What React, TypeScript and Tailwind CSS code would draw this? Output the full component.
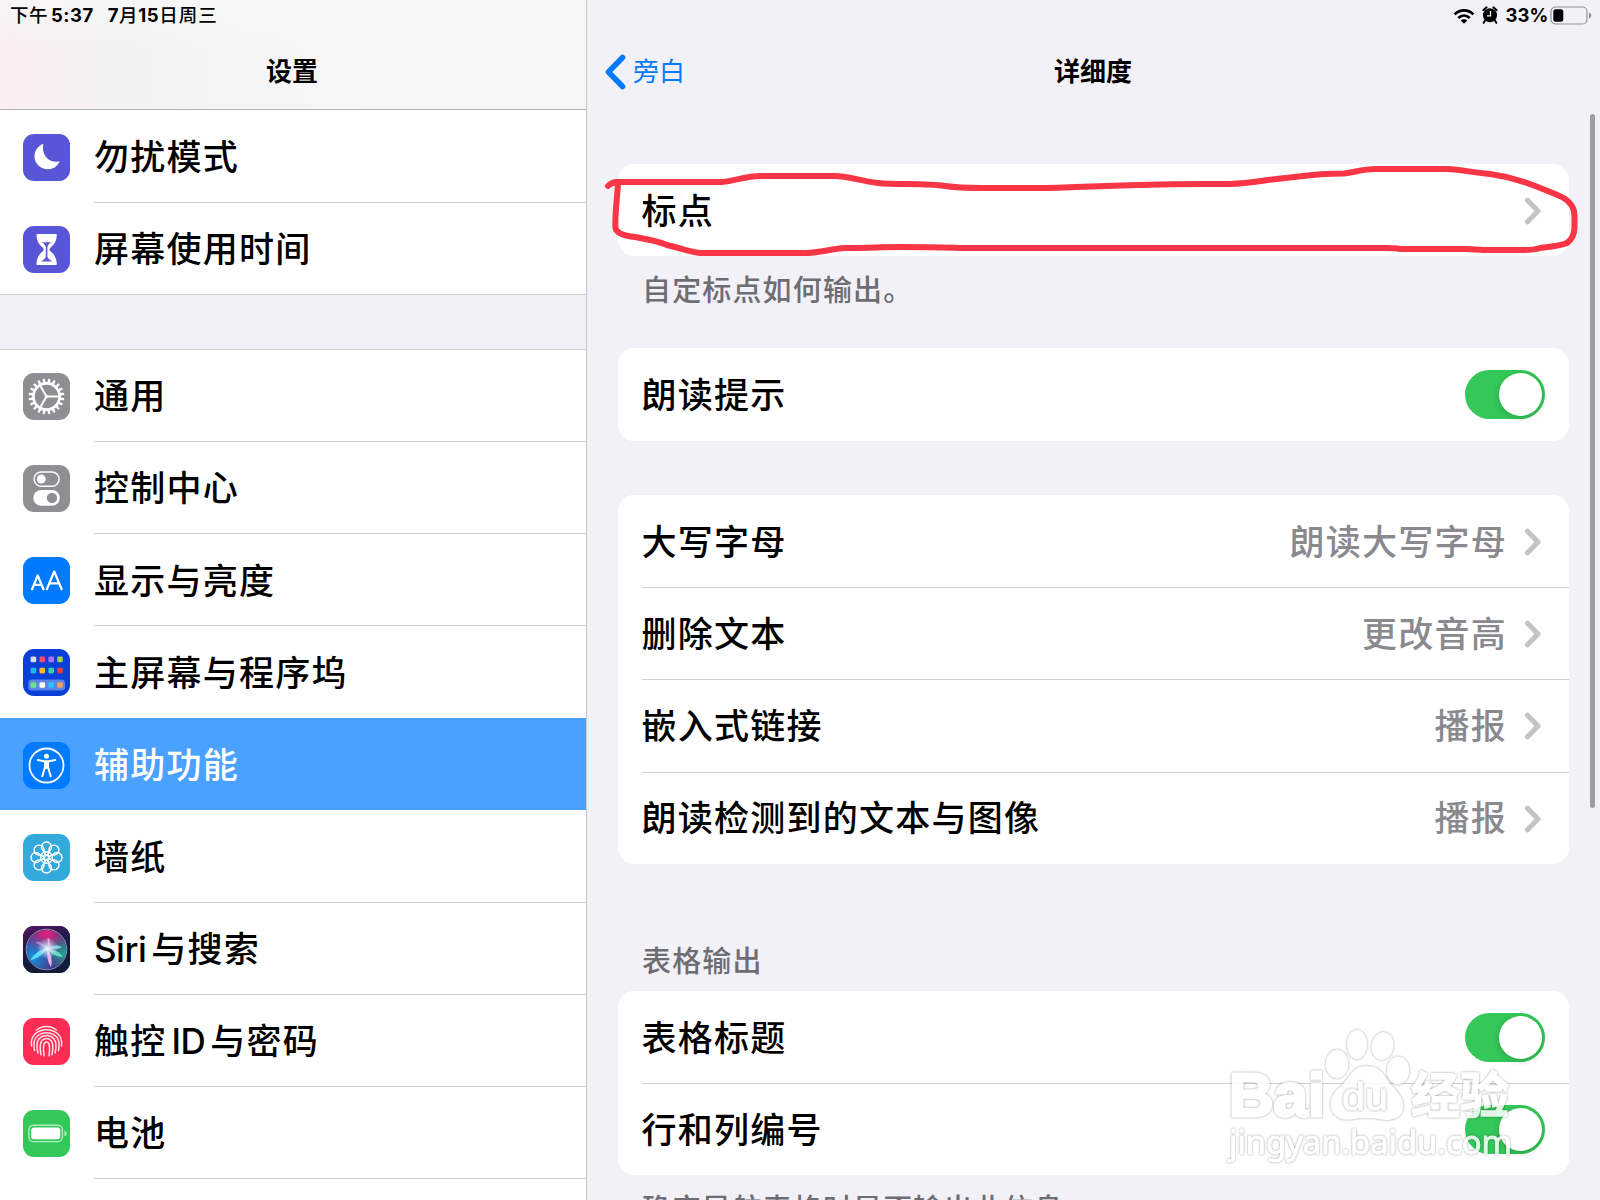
import React from "react";

const FONT = "font-['Inter','Noto_Sans_CJK_SC',sans-serif]";

const gearTeeth = Array.from({ length: 20 }, (_, i) => i * 18);
const petals = Array.from({ length: 8 }, (_, i) => i * 45);
const dockDots: [number, number, string][] = [
  [10.4, 10.4, "#d9dde8"], [19.3, 10.4, "#f0506e"], [28.2, 10.4, "#b070f5"], [37, 10.4, "#a6cf4e"],
  [10.4, 21.6, "#22b8f5"], [19.3, 21.6, "#f5b82e"], [28.2, 21.6, "#34d0b0"], [37, 21.6, "#f03c3c"],
  [10.4, 36, "#6be38a"], [19.3, 36, "#ffffff"], [28.2, 36, "#2fc0fa"], [37, 36, "#f5a055"],
];

const icons: Record<string, React.ReactNode> = {
  moon: <path d="M20.300 10.300C18.300 19 24 27.600 32.500 27.800c1.200 0 2.300-.2 3.300-.6.5-.2.8.1.6.6C34.600 32.300 30.200 35.200 25 35.200 17.500 35.200 11.500 29.700 11.500 22.300c0-5.200 3.200-10.200 8.100-12.400.6-.3.9-.1.7.4z" fill="#fff" />,
  hourglass: (
    <>
      <path d="M14.500 8h18.300c.8 0 1.100.5 1 1.300-.3 5.700-2.300 9.200-6.100 12.200-.8.600-1.100 1.300-1.100 2s.3 1.400 1.100 2c3.800 3 5.800 6.500 6.100 12.200.1.800-.2 1.300-1 1.300H14.500c-.8 0-1.100-.5-1-1.300.3-5.700 2.300-9.200 6.100-12.200.8-.6 1.100-1.300 1.100-2s-.3-1.400-1.100-2c-3.800-3-5.800-6.500-6.100-12.200-.1-.8.200-1.300 1-1.300z" fill="#fff" />
      <path d="M18.700 16.200h9.800c-2.300 1.400-3.900 3-4.100 5v9.500c.4 1.700 2.600 3.200 5 4.900H17.800c2.400-1.700 4.600-3.200 5-4.900v-9.500c-.2-2-1.800-3.600-4.100-5z" fill="#5856d6" />
    </>
  ),
  gear: (
    <g stroke="#fff" fill="none">
      <circle cx="23.500" cy="23.500" r="13.100" strokeWidth="2.700" />
      {gearTeeth.map((a) => (
        <path key={a} d="M22 10.200L22.500 5.600h2l.5 4.600z" fill="#fff" stroke="none" transform={`rotate(${a + 9} 23.500 23.500)`} />
      ))}
      <path d="M23.500 23.500H36.500M23.500 23.500L17 12.300M23.500 23.500L17 34.700" strokeWidth="2" />
      <circle cx="23.500" cy="23.500" r="1.700" fill="#fff" stroke="none" />
    </g>
  ),
  control: (
    <>
      <rect x="11.100" y="6.900" width="25" height="14.400" rx="7.200" fill="none" stroke="#fff" strokeWidth="1.500" />
      <circle cx="18.300" cy="14.100" r="4.500" fill="#fff" />
      <rect x="10.300" y="25" width="26.500" height="15.800" rx="7.900" fill="#fff" />
      <circle cx="29" cy="32.900" r="5.200" fill="#8e8e93" />
    </>
  ),
  display: (
    <g fill="none" stroke="#fff" strokeWidth="2.200" strokeLinecap="round" strokeLinejoin="round">
      <path d="M9 32.300L14.700 18.500 20.500 32.300M11 27.800h7.500" />
      <path d="M23.800 32.300L31.200 14.500 38.700 32.300M26.300 26.400h9.800" />
    </g>
  ),
  home: (
    <>
      <rect x="5.300" y="30.600" width="36.800" height="11" rx="3.500" fill="#5b84e8" />
      {dockDots.map(([x, y, c]) => (
        <rect key={`${x}-${y}`} x={x - 2.8} y={y - 2.8} width="5.600" height="5.600" rx="1.300" fill={c} />
      ))}
    </>
  ),
  access: (
    <>
      <circle cx="23.500" cy="23.500" r="17" fill="none" stroke="#fff" strokeWidth="1.800" />
      <circle cx="23.500" cy="14.300" r="2.500" fill="#fff" />
      <path d="M14.800 18.100l6.200 1.200h5l6.200-1.200M22 19.500v5.500l-2.700 9.300M25 19.500v5.500l2.700 9.300M23.500 19.500v6.500" fill="none" stroke="#fff" strokeWidth="2" strokeLinecap="round" strokeLinejoin="round" />
    </>
  ),
  wallpaper: (
    <g fill="none" stroke="#fff" strokeWidth="1.400">
      {petals.map((a) => (
        <g key={a} transform={`rotate(${a} 23.500 23.500)`}>
          <circle cx="23.500" cy="13" r="5" />
          <path d="M20.800 17.600L23.500 21.500 26.200 17.600" strokeWidth="1.100" />
        </g>
      ))}
      <circle cx="23.500" cy="23.500" r="2.600" strokeWidth="1.100" />
    </g>
  ),
  siri: (
    <>
      <defs>
        <linearGradient id="orbBack" x1="0" y1="0" x2=".3" y2="1">
          <stop offset="0" stopColor="#5a1463" />
          <stop offset=".45" stopColor="#1c1a48" />
          <stop offset="1" stopColor="#101c38" />
        </linearGradient>
        <radialGradient id="orbPink" cx=".5" cy=".1" r=".6">
          <stop offset="0" stopColor="#e0247c" />
          <stop offset="1" stopColor="#e0247c" stopOpacity="0" />
        </radialGradient>
        <radialGradient id="orbTeal" cx=".95" cy=".6" r=".5">
          <stop offset="0" stopColor="#1fa48e" />
          <stop offset="1" stopColor="#1fa48e" stopOpacity="0" />
        </radialGradient>
        <radialGradient id="orbBlue" cx=".15" cy=".7" r=".6">
          <stop offset="0" stopColor="#1496e0" />
          <stop offset="1" stopColor="#1496e0" stopOpacity="0" />
        </radialGradient>
        <radialGradient id="orbGlow">
          <stop offset="0" stopColor="#fff" />
          <stop offset=".4" stopColor="#d8e6ff" stopOpacity=".65" />
          <stop offset="1" stopColor="#b8d4ff" stopOpacity="0" />
        </radialGradient>
      </defs>
      <rect width="47" height="47" fill="url(#orbBack)" />
      <circle cx="23.500" cy="23.500" r="19.800" fill="#4a2c82" />
      <circle cx="23.500" cy="23.500" r="19.800" fill="url(#orbPink)" />
      <circle cx="23.500" cy="23.500" r="19.800" fill="url(#orbTeal)" />
      <circle cx="23.500" cy="23.500" r="19.800" fill="url(#orbBlue)" />
      <circle cx="23.500" cy="23.500" r="20.300" fill="none" stroke="#8f93b4" strokeWidth="1" />
      <path d="M24 22L12.500 17c1-2.500 6-2 11.500 5z" fill="#c48ae0" opacity=".7" />
      <path d="M25 22l-.5-10.500c3 1 3.500 5 .5 10.500z" fill="#f2a0cc" opacity=".85" />
      <path d="M25 22c5-3.500 11-3 14-1-4 2.500-9 3-14 1z" fill="#8adce8" opacity=".85" />
      <path d="M25 23c6 0 12 3 15 8-6 0-12-3-15-8z" fill="#6fe8c4" opacity=".85" />
      <path d="M24.500 23c4 6 5 12 3.500 18-3-4-4.500-11-3.500-18z" fill="#f4b4ee" opacity=".95" />
      <path d="M24 22c-3 6-9 10.500-16.500 12C11 28 17 23.500 24 22z" fill="#5fe0fa" opacity=".95" />
      <circle cx="24.500" cy="22.500" r="11" fill="url(#orbGlow)" />
    </>
  ),
  touch: (
    <g fill="none" stroke="#ffe3e8" strokeWidth="1.500" strokeLinecap="round">
      <path d="M13.500 12c5.500-4.800 14.500-4.800 20 0" />
      <path d="M8.500 28c-.7-5.500.7-9.800 4-12.500 6-5 16-5 22 0 3.300 2.700 4.700 7 4 12.500" />
      <path d="M11.600 32.500c-1.300-6-.8-11.500 2.700-14.500 5.200-4.500 13.200-4.500 18.400 0 3.500 3 4 8.500 2.700 14.500" />
      <path d="M14.900 35c-1.400-6-1.400-11.500 1.400-14.500 4-4 10.400-4 14.400 0 2.800 3 2.800 8.500 1.400 14.500" />
      <path d="M18 36.800c-1.200-6-1.200-11.800 1-14.300 2.500-2.800 6.500-2.800 9 0 2.200 2.500 2.200 8.300 1 14.300" />
      <path d="M21 37.800c-.8-6-.8-10.800.5-12.800 1.200-1.500 2.800-1.500 4 0 1.300 2 1.300 6.800.5 12.800" />
    </g>
  ),
  battery: (
    <>
      <rect x="5.900" y="15.200" width="33.500" height="16.400" rx="4.600" fill="none" stroke="#b5ebc3" strokeWidth="1.400" />
      <rect x="8.200" y="17.600" width="29" height="11.600" rx="2.600" fill="#fff" />
      <path d="M41.500 20.800c1.400.3 2.300 1.300 2.300 2.600s-.9 2.300-2.300 2.600z" fill="#b5ebc3" />
    </>
  ),
};

type Item = { icon: string; label: React.ReactNode; bg: string; active?: boolean; last?: boolean };

function SideRow({ icon, label, bg, active, last }: Item) {
  return (
    <div className={`flex h-[92.15px] shrink-0 items-center pl-[23.500px] ${active ? "bg-[#4ba1ff] text-white" : "text-black"}`}>
      <svg viewBox="0 0 47 47" className={`mt-[3px] -ml-[0.200px] size-[47px] shrink-0 rounded-[11px] ${bg}`}>
        {icons[icon]}
      </svg>
      <div className={`ml-[23.700px] flex h-full flex-1 items-center pt-[3px] text-[35px] font-medium tracking-[1.250px] ${active || last ? "" : "shadow-[0_1px_0_#cfcfd2]"}`}>
        <span>{label}</span>
      </div>
    </div>
  );
}

function Chevron() {
  return (
    <svg viewBox="0 0 18 28" className="h-7 w-[18px]" fill="none" stroke="#c4c4c7" strokeWidth="5.200" strokeLinecap="round" strokeLinejoin="round">
      <path d="M3.500 3.300L14 14 3.500 24.700" />
    </svg>
  );
}

function Toggle() {
  return (
    <div className="flex h-[49px] w-20 items-center justify-end rounded-full bg-[#34c759] pr-[3px]">
      <div className="size-[43px] rounded-full bg-white shadow-[0_2px_7px_rgba(0,0,0,0.18)]" />
    </div>
  );
}

function DetailRow({ label, value, toggle, last }: { label: string; value?: string; toggle?: boolean; last?: boolean }) {
  return (
    <div className={`ml-[23.500px] flex h-[92.200px] items-center justify-between text-[35px] font-medium tracking-[1.250px] ${last ? "" : "shadow-[0_1px_0_#cfcfd2]"}`}>
      <span className="pt-[2px] text-black">{label}</span>
      {toggle ? (
        <div className="mr-6"><Toggle /></div>
      ) : (
        <div className="mr-[27px] flex items-center gap-[17px] pt-[2px]">
          <span className="text-[#8a8a8e]">{value}</span>
          <Chevron />
        </div>
      )}
    </div>
  );
}

function Card({ children, className = "" }: { children: React.ReactNode; className?: string }) {
  return <div className={`mr-[31px] ml-[31px] shrink-0 rounded-2xl bg-white ${className}`}>{children}</div>;
}

function StatusIcons() {
  return (
    <div className="flex h-[31px] shrink-0 items-center justify-end pt-px pr-2 text-[18.500px] font-bold">
      <svg viewBox="0 0 22 16" className="mr-[7px] h-4 w-[22px]">
        <path d="M1.600 6.400C7 1.100 15 1.100 20.400 6.400M5.300 10c3.400-3.200 8-3.200 11.400 0" fill="none" stroke="#000" strokeWidth="2.700" />
        <path d="M11 15.800l-3.300-3.300c1.900-1.700 4.700-1.700 6.600 0z" />
      </svg>
      <svg viewBox="0 0 16 18" className="mr-2 -mt-[2px] h-[18px] w-4">
        <circle cx="8" cy="9.200" r="7" />
        <path d="M1.300 4.200L4.600 1.300M14.700 4.200L11.400 1.300M3 14.500l-1.300 2.300M13 14.500l1.300 2.300" stroke="#000" strokeWidth="1.900" strokeLinecap="round" />
        <path d="M8.500 5v4.800H5" fill="none" stroke="#fff" strokeWidth="1.300" />
      </svg>
      <span className="w-[41.500px]">33%</span>
      <svg viewBox="0 0 42 20" className="ml-[3px] h-5 w-[42px]">
        <rect x="1" y="1" width="36" height="17" rx="4.500" fill="none" stroke="#929296" strokeWidth="1.200" />
        <rect x="3.300" y="3.200" width="10" height="12.600" rx="2.500" />
        <path d="M39 6.500c1.500.5 2.300 1.600 2.300 3s-.8 2.500-2.300 3z" fill="#929296" />
      </svg>
    </div>
  );
}

const OUTLINE = "[filter:drop-shadow(0_0_1px_rgba(0,0,0,0.45))]";

function Watermark() {
  return (
    <svg viewBox="0 0 300 160" className="absolute top-[1020px] left-[1220px] h-[160px] w-[300px] opacity-85">
      <g fill="#fff">
        <g className={OUTLINE}>
          <ellipse cx="117" cy="44" rx="11.300" ry="14.500" />
          <ellipse cx="137" cy="24.500" rx="10" ry="14.800" />
          <ellipse cx="162.500" cy="26" rx="11" ry="14" transform="rotate(10 162.500 26)" />
          <ellipse cx="178" cy="50.500" rx="11.300" ry="14" />
        </g>
        <path className={OUTLINE} d="M147 46c-16 0-17 12-27 21-11 9-13 21-4 29 8 7 19 2 31 2s22 5 31-1c8-6 7-18-3-28-11-11-12-23-28-23z" />
        <text className={OUTLINE} x="9" y="96" fontSize="62" fontWeight="700" textLength="96" lengthAdjust="spacingAndGlyphs" fontFamily="Liberation Sans" stroke="#fff" strokeWidth="3">Bai</text>
        <text className={OUTLINE} x="122" y="90" fontSize="38" fontWeight="400" textLength="46" lengthAdjust="spacingAndGlyphs" fontFamily="Liberation Sans" stroke="#fff" strokeWidth="1">du</text>
        <text className={OUTLINE} x="191" y="93" fontSize="49" fontWeight="700" textLength="98" fontFamily="Noto Sans CJK SC" stroke="#fff" strokeWidth="1.500">经验</text>
        <text className={OUTLINE} x="9" y="134" fontSize="33" textLength="283" lengthAdjust="spacingAndGlyphs" fontFamily="Noto Sans" stroke="#fff" strokeWidth="1">jingyan.baidu.com</text>
      </g>
    </svg>
  );
}

function RedOutline() {
  return (
    <svg viewBox="600 150 990 120" className="pointer-events-none absolute top-[150px] left-[600px] h-[120px] w-[990px]" fill="none" stroke="#fa3545" strokeWidth="6" strokeLinecap="round" strokeLinejoin="round">
      <path d="M608 186Q612 182 617 182H722C735 181 746 176 760 176H835C848 176 860 181 878 183C898 185 925 183 945 186C960 188 965 188 980 188H1045C1080 188 1120 184 1200 184H1230C1252 183 1264 180 1290 177.500C1310 175 1320 173.500 1344 173.500C1356 172 1362 169 1376 169H1447C1457 169 1470 172 1490 174C1520 178 1540 188 1562 197C1571 202 1574.500 208 1574.500 216V227C1574.500 234 1571 240 1567 243C1560 246 1548 247 1540 248Q1534 250 1524 250H1490C1478 250 1475 249 1465 249H1400Q1395 248 1385 248H960C940 247 930 247 900 247C880 247 870 248 845 248C830 249 820 253 805 253H700C690 252 680 248 667 245C655 240 645 239 635 237C625 236 617 234 615.500 228C614.500 218 617 200 618 184" />
    </svg>
  );
}

export default function App() {
  return (
    <div className={`relative flex h-[1200px] w-[1600px] overflow-hidden bg-[#f2f1f7] text-black ${FONT}`}>
      <aside className="flex w-[587px] shrink-0 flex-col overflow-hidden border-r border-[#c8c8cc]">
        <header className="flex h-[110px] shrink-0 flex-col border-b border-[#b3b3b6] bg-[linear-gradient(180deg,rgba(247,247,248,0.8)_0,rgba(247,247,248,0)_50px),linear-gradient(90deg,#fbedf0_0,#f7f0f2_60px,#f2f2f3_120px,#f5f5f6_230px,#f7f7f8_400px)]">
          <div className="flex h-[31px] items-center gap-[14px] pt-px pl-[10px] text-[18.500px] font-bold tracking-[0.500px]">
            <span><span className="font-medium">下午</span><span className="ml-[3px]">5:37</span></span>
            <span>7<span className="font-medium tracking-[0.800px]">月</span>15<span className="font-medium tracking-[1px]">日周三</span></span>
          </div>
          <h1 className="flex h-20 items-center justify-center pt-[3px] pr-[2px] text-[26px] font-bold">设置</h1>
        </header>
        <div className="border-b border-[#cfcfd2] bg-white">
          <SideRow icon="moon" label="勿扰模式" bg="bg-[#5856d6]" />
          <SideRow icon="hourglass" label="屏幕使用时间" bg="bg-[#5856d6]" last />
        </div>
        <div className="h-[53.700px] shrink-0" />
        <div className="border-t border-[#cfcfd2] bg-white">
          <div className="-mt-px">
            <SideRow icon="gear" label="通用" bg="bg-[#8e8e93]" />
            <SideRow icon="control" label="控制中心" bg="bg-[#8e8e93]" />
            <SideRow icon="display" label="显示与亮度" bg="bg-[#007aff]" />
            <SideRow icon="home" label="主屏幕与程序坞" bg="bg-[#0a3fd8]" last />
            <SideRow icon="access" label="辅助功能" bg="bg-[#007aff]" active />
            <SideRow icon="wallpaper" label="墙纸" bg="bg-[#34aadc]" />
            <SideRow icon="siri" label={<><span className="tracking-[-0.500px]">Siri</span><span className="ml-[5px]">与搜索</span></>} bg="bg-[#1b1b3a]" />
            <SideRow icon="touch" label={<>触控<span className="mx-[5px] tracking-[-0.500px]">ID</span>与密码</>} bg="bg-[#ff2d55]" />
            <SideRow icon="battery" label="电池" bg="bg-[#34c759]" />
            <div className="h-10" />
          </div>
        </div>
      </aside>

      <main className="flex min-w-0 flex-1 flex-col overflow-hidden">
        <StatusIcons />
        <div className="grid h-20 shrink-0 grid-cols-3 items-center pt-px">
          <div className="flex items-center gap-[7px] pl-[18px] text-[26px] text-[#007aff]">
            <svg viewBox="0 0 21 36" className="h-9 w-[21px]" fill="none" stroke="currentColor" strokeWidth="5.600" strokeLinecap="round" strokeLinejoin="round">
              <path d="M17.500 3.500L3.500 18l14 14.500" />
            </svg>
            <span>旁白</span>
          </div>
          <h2 className="pr-px text-center text-[26px] font-bold">详细度</h2>
        </div>
        <div className="h-[53px] shrink-0" />
        <Card><DetailRow label="标点" last /></Card>
        <p className="mt-[11.500px] h-[80.800px] shrink-0 pl-[55px] text-[29px] leading-[46px] font-medium tracking-[1.150px] text-[#6d6d72]">自定标点如何输出。</p>
        <Card><DetailRow label="朗读提示" toggle last /></Card>
        <Card className="mt-[54.300px]">
          <DetailRow label="大写字母" value="朗读大写字母" />
          <DetailRow label="删除文本" value="更改音高" />
          <DetailRow label="嵌入式链接" value="播报" />
          <DetailRow label="朗读检测到的文本与图像" value="播报" last />
        </Card>
        <p className="mt-[75px] h-[52.300px] shrink-0 pl-[55px] text-[29px] leading-[46px] font-medium tracking-[1.150px] text-[#6d6d72]">表格输出</p>
        <Card>
          <DetailRow label="表格标题" toggle />
          <DetailRow label="行和列编号" toggle last />
        </Card>
        <p className="mt-[11.500px] shrink-0 pl-[55px] text-[29px] leading-[46px] font-medium tracking-[1.150px] whitespace-nowrap text-[#6d6d72]">确定导航表格时是否输出此信息。</p>
      </main>

      <div className="absolute top-[114px] left-[1590px] h-[694px] w-[5px] rounded-full bg-[#9c9ca1]" />
      <RedOutline />
      <Watermark />
    </div>
  );
}
